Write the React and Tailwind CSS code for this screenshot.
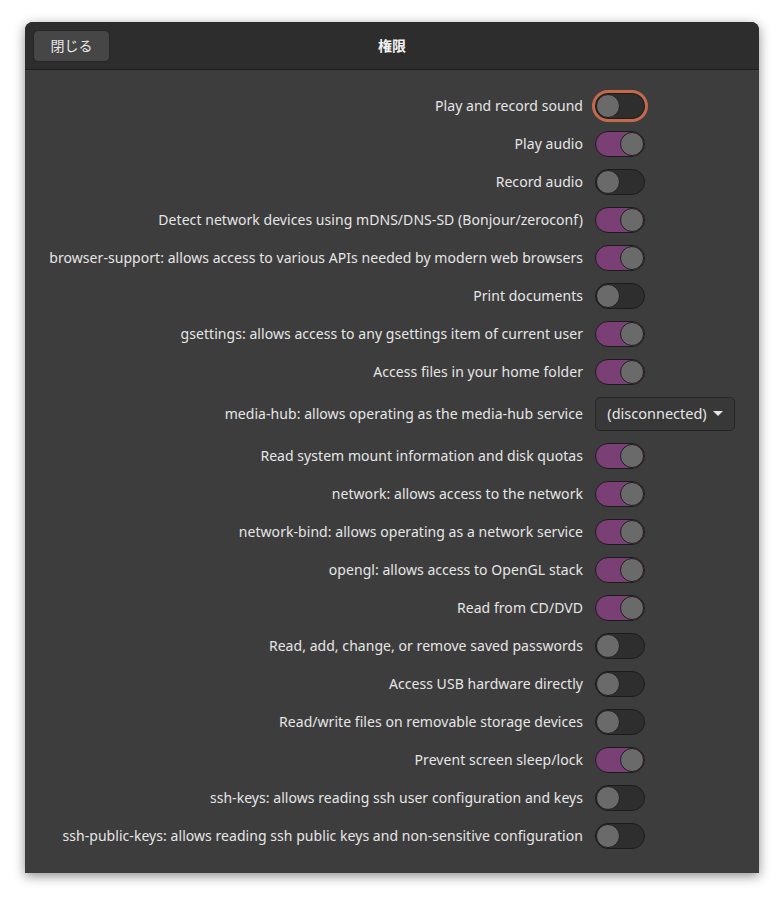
import React from "react";

const rows = [
  ["Play and record sound", "off", true],
  ["Play audio", "on"],
  ["Record audio", "off"],
  ["Detect network devices using mDNS/DNS-SD (Bonjour/zeroconf)", "on"],
  ["browser-support: allows access to various APIs needed by modern web browsers", "on"],
  ["Print documents", "off"],
  ["gsettings: allows access to any gsettings item of current user", "on"],
  ["Access files in your home folder", "on"],
  ["media-hub: allows operating as the media-hub service", "dropdown"],
  ["Read system mount information and disk quotas", "on"],
  ["network: allows access to the network", "on"],
  ["network-bind: allows operating as a network service", "on"],
  ["opengl: allows access to OpenGL stack", "on"],
  ["Read from CD/DVD", "on"],
  ["Read, add, change, or remove saved passwords", "off"],
  ["Access USB hardware directly", "off"],
  ["Read/write files on removable storage devices", "off"],
  ["Prevent screen sleep/lock", "on"],
  ["ssh-keys: allows reading ssh user configuration and keys", "off"],
  ["ssh-public-keys: allows reading ssh public keys and non-sensitive configuration", "off"],
];

function Toggle({ on, focus }) {
  return (
    <div
      className={
        "w-[50px] h-[26px] rounded-full flex items-center border border-[#1c1c1c] " +
        (on ? "bg-[#7a3f74] justify-end" : "bg-[#2e2e2e] justify-start") +
        (focus ? " outline-[3px] outline-solid outline-[#c4694b]" : "")
      }
    >
      <div className="w-[24px] h-[24px] rounded-full bg-[#6a6a6a] border border-[#1f1f1f]" />
    </div>
  );
}

export default function App() {
  return (
    <div className="w-[784px] h-[901px] bg-white pt-[22px] pl-[25px]" style={{ fontFamily: '"Noto Sans", "Noto Sans CJK JP", sans-serif' }}>
      <div className="w-[734px] h-[851px] rounded-t-[8px] bg-[#3d3d3d] shadow-[0_3px_12px_rgba(0,0,0,0.45)] flex flex-col overflow-hidden">
        <div className="h-[48px] bg-[#2d2d2d] border-b border-[#1e1e1e] flex items-center relative shrink-0">
          <button className="ml-[8px] w-[77px] h-[32px] rounded-[5px] bg-[#464646] border border-[#262626] text-[#e8e8e8] text-[14px] flex items-center justify-center" style={{ fontFamily: '"Noto Sans CJK JP", sans-serif' }}>
            閉じる
          </button>
          <div className="absolute left-0 right-0 top-[13px] text-center text-[#f2f2f2] text-[14px] font-bold pointer-events-none" style={{ fontFamily: '"Noto Sans CJK JP", sans-serif' }}>
            権限
          </div>
        </div>
        <div className="flex flex-col pt-[23px] pr-[24px] gap-[12px]">
          {rows.map(([label, kind, focus], i) => (
            <div key={i} className="flex items-center justify-end gap-[12px]">
              <span className="text-[#e6e6e6] text-[14px] leading-none tracking-[0.05px]">{label}</span>
              {kind === "dropdown" ? (
                <div className="w-[140px] h-[34px] rounded-[5px] bg-[#383838] border border-[#262626] flex items-center justify-center gap-[6px] text-[#e6e6e6] text-[14.5px]">
                  <span>(disconnected)</span>
                  <svg width="10" height="6" viewBox="0 0 10 6"><path d="M0 0H10L5 5Z" fill="#e6e6e6" /></svg>
                </div>
              ) : (
                <div className="w-[140px] flex justify-start">
                  <Toggle on={kind === "on"} focus={focus} />
                </div>
              )}
            </div>
          ))}
        </div>
      </div>
    </div>
  );
}
